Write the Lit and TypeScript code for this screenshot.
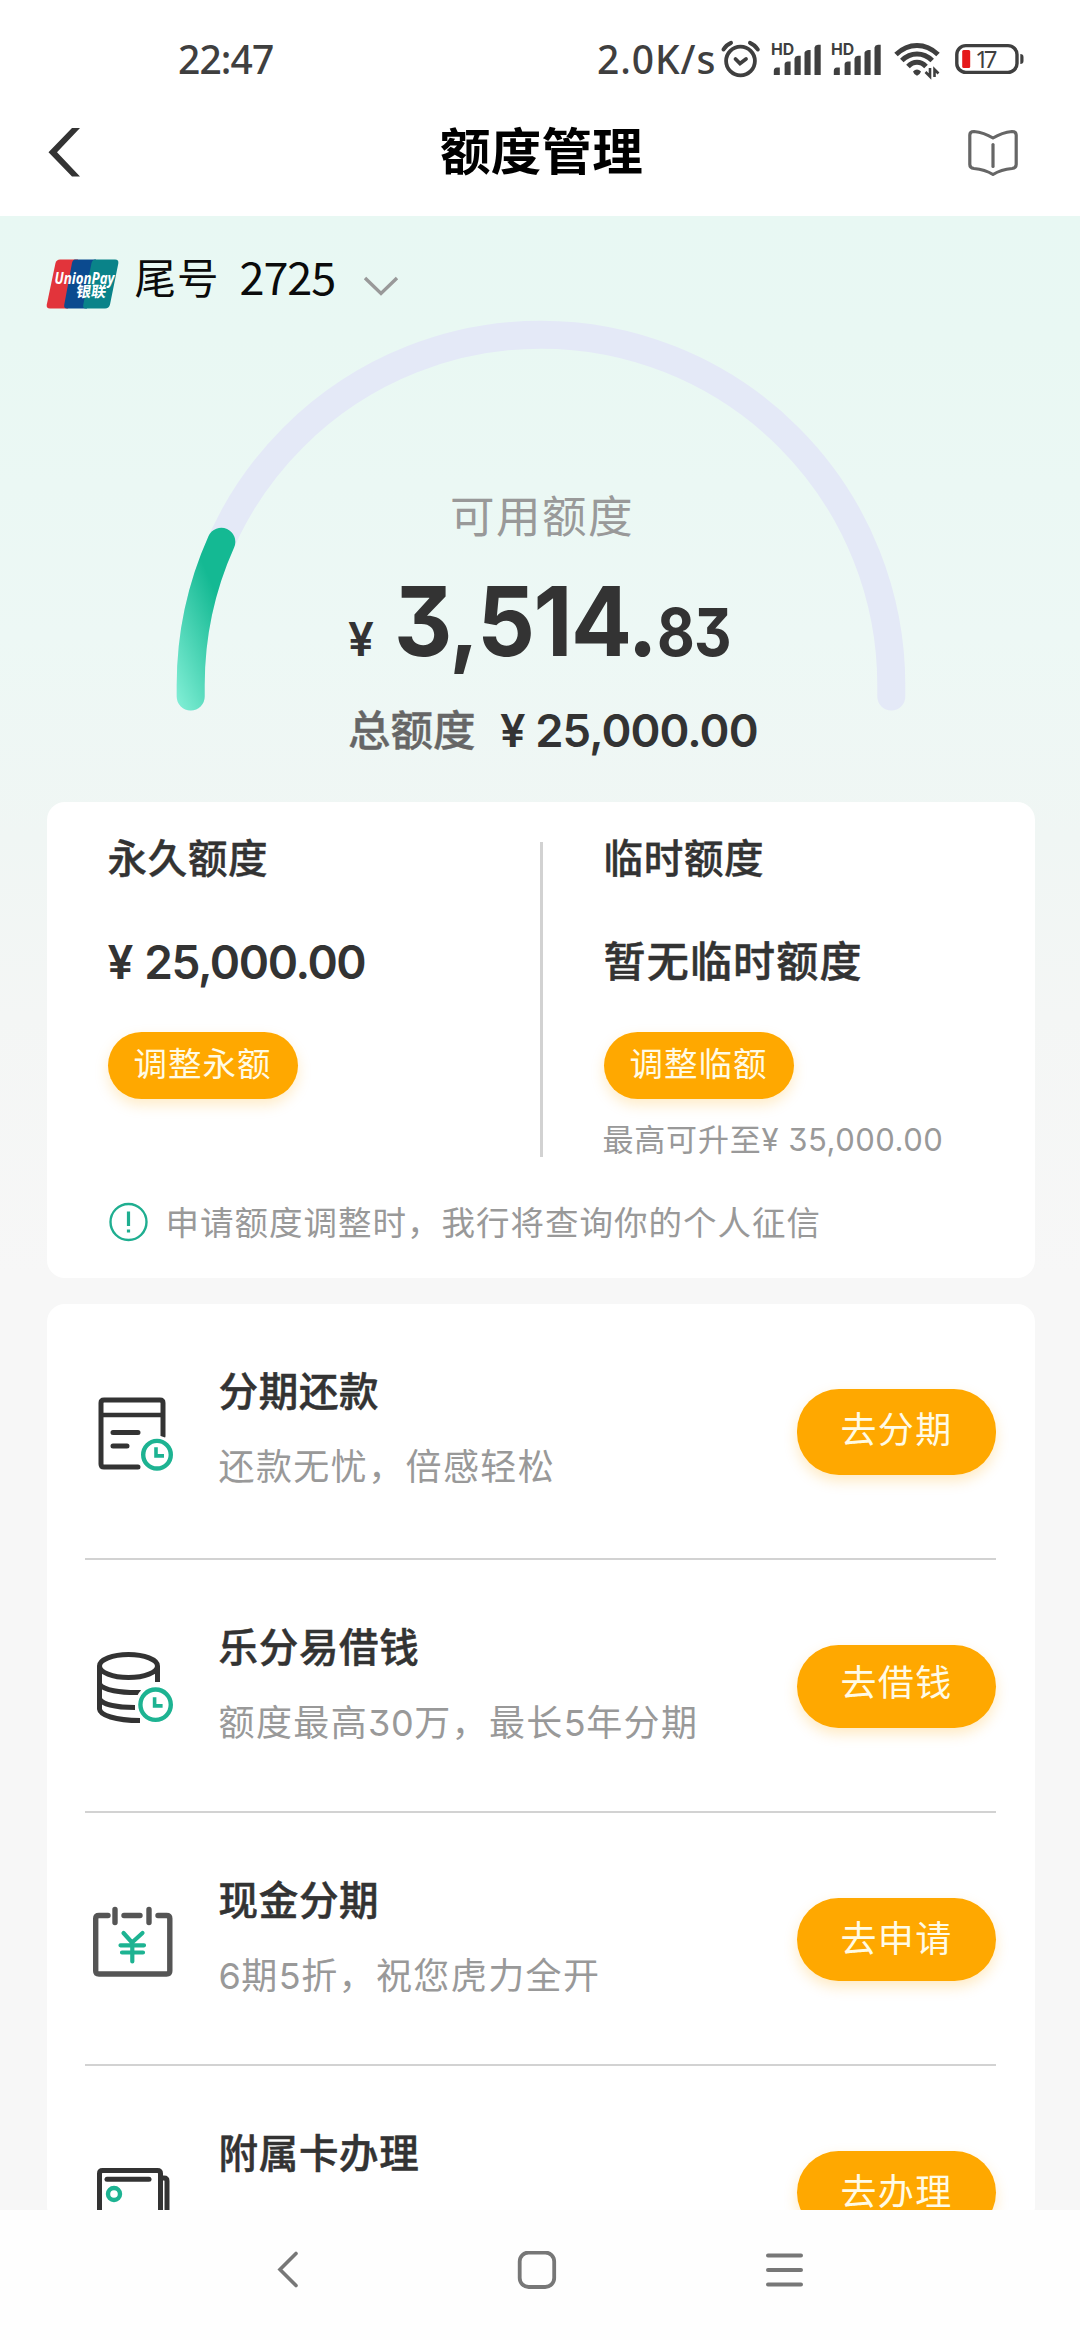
import { LitElement, html, svg, css, nothing } from "lit";
import { customElement, property } from "lit/decorators.js";

const clock = (cx: number, cy: number, r: number) => svg`
  <circle cx=${cx} cy=${cy} r=${r} fill="none" stroke="#1db392" stroke-width="4.4" />
  <path d="M${cx - 1} ${cy - 7.5}V${cy + 1.2}H${cx + 7}" fill="none" stroke="#1db392" stroke-width="3.6" />`;

const icons: Record<string, unknown> = {
  bill: svg`
    <g fill="none" stroke="#333" stroke-width="5" stroke-linecap="round">
      <path d="M73 45V12Q73 9 70 9H14Q11 9 11 12V73Q11 76 14 76H48" />
      <path d="M11 24H73" stroke-width="4.5" stroke-linecap="butt" />
      <path d="M23 41.500H48M23 55H37" />
    </g>
    <circle cx="67" cy="63.700" r="19" fill="#fff" />
    ${clock(67, 63.7, 13.8)}`,
  coins: svg`
    <g fill="none" stroke="#333" stroke-width="5">
      <ellipse cx="38.500" cy="19" rx="29" ry="11.500" />
      <path d="M9.500 19V62C10 68 25 73.500 50 73.500" />
      <path d="M67.500 19V35" />
      <path d="M9.500 37C13 43 30 46 51 45.500" />
      <path d="M9.500 52C13 58 28 60.500 45 60.500" />
    </g>
    <circle cx="65.600" cy="57.700" r="20.500" fill="#fff" />
    ${clock(65.6, 57.7, 15.2)}`,
  calendar: svg`
    <g fill="none" stroke="#555" stroke-width="5.400" stroke-linecap="round">
      <path d="M18 15.500H9Q5.700 15.500 5.700 18.500V71Q5.700 74 9 74H76.500Q79.800 74 79.800 71V18.500Q79.800 15.500 76.500 15.500H68" />
      <path d="M34 15.500H50M25 9.500V22.500M59 9.500V22.500" />
    </g>
    <g fill="none" stroke="#1db392" stroke-width="4.200" stroke-linecap="round">
      <path d="M33.500 33L42 42.500L52.500 33M30.500 45.300H54M32 52.500H53M42.300 43V61.500" />
    </g>`,
  cards: svg`
    <g fill="none" stroke="#333" stroke-width="5">
      <path d="M9.500 76V20.500Q9.500 17.500 12.500 17.500H67.500Q70.500 17.500 70.500 20.500V76" />
      <path d="M70.500 25H74Q77 25 77 28V76" />
      <path d="M17 26.300H59" stroke-linecap="round" />
    </g>
    <circle cx="24" cy="41" r="6" fill="none" stroke="#1db392" stroke-width="4.400" />`,
};

const signal = svg`
  <path fill="#3f3f3f" d="M2.800 35V31Q2.800 27.500 6 27.500H8.800V35ZM13.600 35V24Q14 21.500 17 21.500H19.600V35ZM23.500 35V18.500Q24 16 27 15.700H29.700V35ZM33.500 35V12.500Q34 10.500 37 10H39.600V35ZM43.500 35V7.500Q44 5 47 4.700H49.700V35Z" />
  <text class="hd" x="0" y="15.400">HD</text>`;

@customElement("status-bar")
export class StatusBar extends LitElement {
  static styles = css`
    :host { display: block; }
    .bar { display: flex; align-items: flex-start; height: 80px; padding: 40px 55px 0 178px; box-sizing: border-box; color: #3f3f3f; }
    .label { display: block; margin-top: -1px; font: 500 39px/40px "Noto Sans", "Noto Sans CJK SC", sans-serif; white-space: pre; }
    .time { width: 419px; }
    .time .label { letter-spacing: -0.9px; }
    .speed { width: 124px; }
    .speed .label { letter-spacing: 0.9px; }
    svg { display: block; flex: none; overflow: visible; }
    .hd { font: 700 15.800px Inter, sans-serif; fill: #3f3f3f; }
    .pct { font: 400 24px "Noto Sans", sans-serif; fill: #3f3f3f; }
  `;
  render() {
    return html`<div class="bar">
      <div class="time"><span class="label">22:47</span></div>
      <div class="speed"><span class="label">2.0K/s</span></div>
      <svg width="50" height="40" viewBox="0 0 50 40">
        <g fill="none" stroke="#3f3f3f" stroke-width="3.800" stroke-linecap="round">
          <circle cx="19.500" cy="21" r="14.400" />
          <path d="M14.500 19L19 23.500L25 19" />
          <path d="M2.500 9.500Q5 5 10 2.800M29 2.800Q34 5 36.800 9.500" stroke-width="4" />
        </g>
      </svg>
      <svg width="60" height="40" viewBox="0 0 60 40">${signal}</svg>
      <svg width="63" height="40" viewBox="0 0 63 40">${signal}</svg>
      <svg width="61" height="40" viewBox="0 0 61 40">
        <g fill="none" stroke="#3f3f3f" stroke-width="5">
          <path d="M2 14.500Q11.500 5.500 23 5.500T44 14.500" />
          <path d="M7.800 20.500Q14.500 14 23 14T38.200 20.500" />
          <path d="M14 26.500Q18 22.300 23 22.300T32 26.500" />
        </g>
        <path fill="#3f3f3f" d="M19 31.500Q23 27.500 27 31.500Q26.500 34 23 35.700Q19.500 34 19 31.500Z" />
        <path fill="none" stroke="#3f3f3f" stroke-width="2.600" d="M36 28V36.500L31.500 32M40.500 37V29.500L44.500 33.500" />
      </svg>
      <svg width="70" height="40" viewBox="0 0 70 40">
        <rect x="1.800" y="5.600" width="60.200" height="26.800" rx="9" fill="none" stroke="#3f3f3f" stroke-width="3.400" />
        <rect x="7.200" y="10" width="8" height="18" rx="1.500" fill="#e5191b" />
        <text class="pct" x="20" y="28.300" textLength="22.500">17</text>
        <path d="M65.300 14Q68.500 14 68.500 17V21Q68.500 24 65.300 24Z" fill="#3f3f3f" />
      </svg>
    </div>`;
  }
}

@customElement("limit-gauge")
export class LimitGauge extends LitElement {
  @property({ type: Number }) ratio = 0.1406;
  static styles = css`
    :host { display: grid; grid-template: 1fr / 1fr; }
    svg { grid-area: 1 / 1; display: block; }
    .copy { grid-area: 1 / 1; padding: 168px 0 0 172px; color: #333; }
    .caption { padding-left: 102px; font: 400 44.500px/52px "Noto Sans CJK SC", sans-serif; letter-spacing: 1.500px; color: #999; }
    .amount { display: flex; align-items: baseline; height: 105px; margin-top: 29px; font-family: Inter, sans-serif; font-weight: 600; font-feature-settings: "cv09"; line-height: 105px; white-space: pre; }
    .yen { font-size: 46px; width: 46px; }
    .whole { font-size: 96px; letter-spacing: -1.500px; width: 262.500px; font-weight: 700; transform: scaleX(0.94); transform-origin: 0 50%; }
    .cents { font-size: 66px; font-weight: 700; letter-spacing: -1px; transform: scaleX(0.88); transform-origin: 0 50%; }
    .total { display: flex; margin-top: 26px; line-height: 60px; }
    .total .name { width: 152px; margin-top: 0; font: 500 42.500px/56px "Noto Sans CJK SC", sans-serif; color: #666; -webkit-text-stroke: 0.4px #666; }
    .total .sum { font: 600 45.400px/61px Inter, sans-serif; letter-spacing: -0.900px; }
  `;
  render() {
    const r = 350.3, cx = 365, cy = 365;
    const a = Math.PI * (1 - this.ratio + 0.0065);
    const x = cx + r * Math.cos(a), y = cy - r * Math.sin(a);
    return html`
      <svg width="730" height="400" viewBox="0 0 730 400">
        <defs>
          <linearGradient id="g" gradientUnits="userSpaceOnUse" x1="-6" y1="370" x2="68" y2="338">
            <stop offset="0" stop-color="#82efd6" />
            <stop offset="1" stop-color="#14b993" />
          </linearGradient>
        </defs>
        <g fill="none" stroke-width="28" stroke-linecap="round">
          <path stroke="#e4e9f7" d="M${cx - r} 376.500V${cy}A${r} ${r} 0 0 1 ${cx + r} ${cy}V376.500" />
          <path stroke="url(#g)" d="M${cx - r} 376.500V${cy}A${r} ${r} 0 0 1 ${x} ${y}" />
        </g>
      </svg>
      <div class="copy">
        <div class="caption">可用额度</div>
        <div class="amount"><span class="yen">¥</span><span class="whole">3,514.</span><span class="cents">83</span></div>
        <div class="total"><span class="name">总额度</span><span class="sum">¥ 25,000.00</span></div>
      </div>`;
  }
}

@customElement("service-row")
export class ServiceRow extends LitElement {
  @property() icon = "";
  @property() heading = "";
  @property() note = "";
  @property() action = "";
  static styles = css`
    :host { display: block; font-family: "Noto Sans CJK SC", sans-serif; }
    .row { display: flex; align-items: flex-start; height: 100%; box-sizing: border-box; }
    .icon { display: block; flex: none; margin: 87px 38.500px 0 5px; }
    .text { flex: 1; padding-top: 60px; }
    .heading { font-size: 39.500px; font-weight: 500; line-height: 50px; letter-spacing: 0.7px; color: #333; -webkit-text-stroke: 0.5px #333; }
    .note { margin-top: 25px; font-size: 36px; line-height: 50px; letter-spacing: 1.400px; color: #999; }
    .num { font-family: Inter, sans-serif; font-feature-settings: "cv09"; font-size: 36px; line-height: 1; letter-spacing: 0.5px; }
    .btn { flex: none; width: 199px; height: 83px; margin-top: 85px; border: 0; padding: 0 0 7px; border-radius: 42px; background: #ffa800; color: #fffbe6; font: 400 36px/76px "Noto Sans CJK SC", sans-serif; letter-spacing: 1.300px; box-shadow: 0 6px 14px rgba(255, 168, 0, 0.24); }
    :host(:first-child) .btn { height: 86px; padding-bottom: 10px; }
    :host(:nth-child(2)) .btn { padding-bottom: 13px; line-height: 70px; }
  `;
  render() {
    const parts = this.note.split(/(\d+)/).filter(Boolean);
    return html`<div class="row">
      <svg class="icon" width="90" height="86" viewBox="0 0 90 86">${icons[this.icon]}</svg>
      <div class="text">
        <div class="heading">${this.heading}</div>
        <div class="note">${parts.map((p) => (/\d/.test(p) ? html`<span class="num">${p}</span>` : p))}</div>
      </div>
      ${this.action ? html`<button class="btn">${this.action}</button>` : nothing}
    </div>`;
  }
}

@customElement("app-root")
export class AppRoot extends LitElement {
  static styles = css`
    :host { display: block; width: 1080px; height: 2340px; overflow: hidden; background: #fff; font-family: "Noto Sans CJK SC", sans-serif; }
    .screen { display: flex; flex-direction: column; height: 2340px; }
    svg { display: block; flex: none; }
    .header { display: flex; align-items: center; justify-content: space-between; height: 136px; padding: 8px 60px 0 46px; box-sizing: border-box; background: #fff; }
    .title { font-size: 50.500px; font-weight: 700; line-height: 70px; margin: -8px 0 0 35px; letter-spacing: 0.3px; color: #000; }
    .book { margin-top: 2px; }
    .content { flex: none; height: 1994px; overflow: hidden; background: linear-gradient(#e8f8f3 0, #e9f8f3 120px, #edf8f5 420px, #f0f6f4 620px, #f4f6f5 800px, #f7f7f7 1060px, #f7f7f7 100%); }
    .account { display: flex; align-items: center; height: 104px; padding: 32px 46px 0; box-sizing: border-box; color: #0b0b0b; }
    .tail { margin: -16px 0 0 15.500px; font-size: 41.500px; line-height: 60px; letter-spacing: 1px; }
    .number { margin: -17px 28px 0 20px; font-size: 45px; line-height: 60px; letter-spacing: -1.100px; }
    .chevron { margin-top: 4px; }
    .logo { overflow: visible; }
    .logo-en { font: italic 700 16.500px "Open Sans", sans-serif; fill: #fff; }
    .logo-cn { font: 700 15px "Noto Sans CJK SC", sans-serif; fill: #fff; }
    .gauge { width: 730px; height: 482px; margin-left: 176px; }
    .card { width: 988px; margin-left: 46.500px; border-radius: 18px; background: #fff; box-sizing: border-box; overflow: hidden; }
    .limits { height: 476px; padding: 40px 61px 0; }
    .columns { display: grid; grid-template: 315px / 432px 3px 1fr; height: 315px; }
    .rule { background: #d2d2d2; }
    .column { margin-top: -8px; }
    .temp { padding-left: 61px; }
    .name { font-size: 39.500px; font-weight: 500; line-height: 44px; letter-spacing: 0.7px; color: #333; -webkit-text-stroke: 0.4px #333; }
    .value { height: 50px; margin-top: 58px; color: #333; white-space: pre; }
    .money { font: 600 46px/52px Inter, sans-serif; letter-spacing: -1.400px; word-spacing: 2px; }
    .none { font-size: 42px; font-weight: 500; line-height: 46px; letter-spacing: 1.200px; -webkit-text-stroke: 0.5px #333; }
    .adjust { display: block; width: 190px; height: 67px; margin-top: 46px; padding: 0 0 7px; border: 0; border-radius: 34px; background: #ffa800; color: #fffbe6; font: 400 33.500px/60px "Noto Sans CJK SC", sans-serif; letter-spacing: 1px; box-shadow: 0 6px 14px rgba(255, 168, 0, 0.22); }
    .max { display: flex; margin: 17px 0 0 -1px; font-size: 31px; line-height: 44px; letter-spacing: 0.8px; color: #999; white-space: pre; }
    .max-num { font: 400 31px/48px Inter, sans-serif; font-feature-settings: "cv09"; letter-spacing: 0.5px; }
    .tip { display: flex; align-items: center; gap: 18px; height: 60px; margin-top: 35px; font-size: 33.500px; letter-spacing: 1px; color: #999; }
    .tip-text { margin-top: -4px; white-space: nowrap; }
    .services { height: 920px; margin-top: 26px; padding: 0 38.500px; }
    .service { height: 251px; border-bottom: 2.500px solid #d2d2d2; }
    .service:first-child { height: 254px; }
    .service:last-child { border-bottom: 0; }
    .nav { display: flex; flex: 1; align-items: center; padding: 0 276px 8px; justify-content: space-between; background: #fefefe; box-sizing: border-box; }
    .home { margin-left: 10px; }
  `;

  private services = [
    { icon: "bill", heading: "分期还款", note: "还款无忧，倍感轻松", action: "去分期" },
    { icon: "coins", heading: "乐分易借钱", note: "额度最高30万，最长5年分期", action: "去借钱" },
    { icon: "calendar", heading: "现金分期", note: "6期5折，祝您虎力全开", action: "去申请" },
    { icon: "cards", heading: "附属卡办理", note: "", action: "去办理" },
  ];

  render() {
    return html`<div class="screen">
      <status-bar></status-bar>
      <header class="header">
        <svg width="36" height="50" viewBox="0 0 36 50"><path d="M34 1L2.500 25.300L26 49.500H34L11 25.300L34 1H26L2.500 25.300Z" fill="#333" /></svg>
        <div class="title">额度管理</div>
        <svg class="book" width="54" height="50" viewBox="0 0 54 50">
          <g fill="none" stroke="#666" stroke-width="3.200" stroke-linecap="round" stroke-linejoin="round">
            <path d="M27 10Q18 4.500 8 3.500Q3.800 3.500 3.800 7V36.500Q3.800 40 8 40.500Q19 41.500 27 46.500Q35 41.500 46 40.500Q50.200 40 50.200 36.500V7Q50.200 3.500 46 3.500Q36 4.500 27 10Z" />
            <path d="M27 16.500V38.500" />
          </g>
        </svg>
      </header>
      <main class="content">
        <div class="account">
          <svg class="logo" width="73" height="50" viewBox="0 0 73 50">
            <path fill="#e2343b" d="M14 0.500H32L22 49.500H4Q0 49.500 0.800 45.500L9.500 4Q10.500 0.500 14 0.500Z" />
            <path fill="#0b4a8f" d="M29 0.500H50L41 49.500H21Q17.500 49.500 18.300 45.500L26 4Q26.800 0.500 29 0.500Z" />
            <path fill="#0a8389" d="M49 0.500H69Q73 0.500 72.300 4.500L64 45.500Q63 49.500 59 49.500H39.500Q36.500 49.500 37.300 45.500L45.500 4Q46.500 0.500 49 0.500Z" />
            <text class="logo-en" x="8.500" y="25" textLength="60" lengthAdjust="spacingAndGlyphs">UnionPay</text>
            <text class="logo-cn" x="30" y="38.500" textLength="30" lengthAdjust="spacingAndGlyphs" transform="skewX(-8) translate(5 0)">银联</text>
          </svg>
          <div class="tail">尾号</div>
          <div class="number">2725</div>
          <svg class="chevron" width="36" height="24" viewBox="0 0 36 24"><path d="M2 4L18 19.500L34 4" fill="none" stroke="#999" stroke-width="3.400" /></svg>
        </div>
        <limit-gauge class="gauge"></limit-gauge>
        <section class="card limits">
          <div class="columns">
            <div class="column">
              <div class="name">永久额度</div>
              <div class="value money">¥ 25,000.00</div>
              <button class="adjust">调整永额</button>
            </div>
            <div class="rule"></div>
            <div class="column temp">
              <div class="name">临时额度</div>
              <div class="value none">暂无临时额度</div>
              <button class="adjust">调整临额</button>
              <div class="max"><span>最高可升至</span><span class="max-num">¥ 35,000.00</span></div>
            </div>
          </div>
          <div class="tip">
            <svg width="40" height="40" viewBox="0 0 40 40">
              <circle cx="20.500" cy="20" r="18" fill="none" stroke="#1fae90" stroke-width="2.400" />
              <path d="M20.500 9.500V24M20.500 27.500V30.500" stroke="#1fae90" stroke-width="3.200" />
            </svg>
            <span class="tip-text">申请额度调整时，我行将查询你的个人征信</span>
          </div>
        </section>
        <section class="card services">
          ${this.services.map((s) => html`<service-row class="service" .icon=${s.icon} .heading=${s.heading} .note=${s.note} .action=${s.action}></service-row>`)}
        </section>
      </main>
      <nav class="nav">
        <svg width="24" height="40" viewBox="0 0 24 40"><path d="M20 2.500L4 18.500L20 34.500" fill="none" stroke="#777" stroke-width="3.600" stroke-linecap="round" /></svg>
        <svg class="home" width="40" height="40" viewBox="0 0 40 40"><rect x="2.700" y="1.500" width="34.500" height="34.500" rx="9" fill="none" stroke="#777" stroke-width="3.800" /></svg>
        <svg width="40" height="40" viewBox="0 0 40 40"><path d="M4 4.500H37M4 19H37M4 33.500H37" stroke="#777" stroke-width="4" stroke-linecap="round" /></svg>
      </nav>
    </div>`;
  }
}
